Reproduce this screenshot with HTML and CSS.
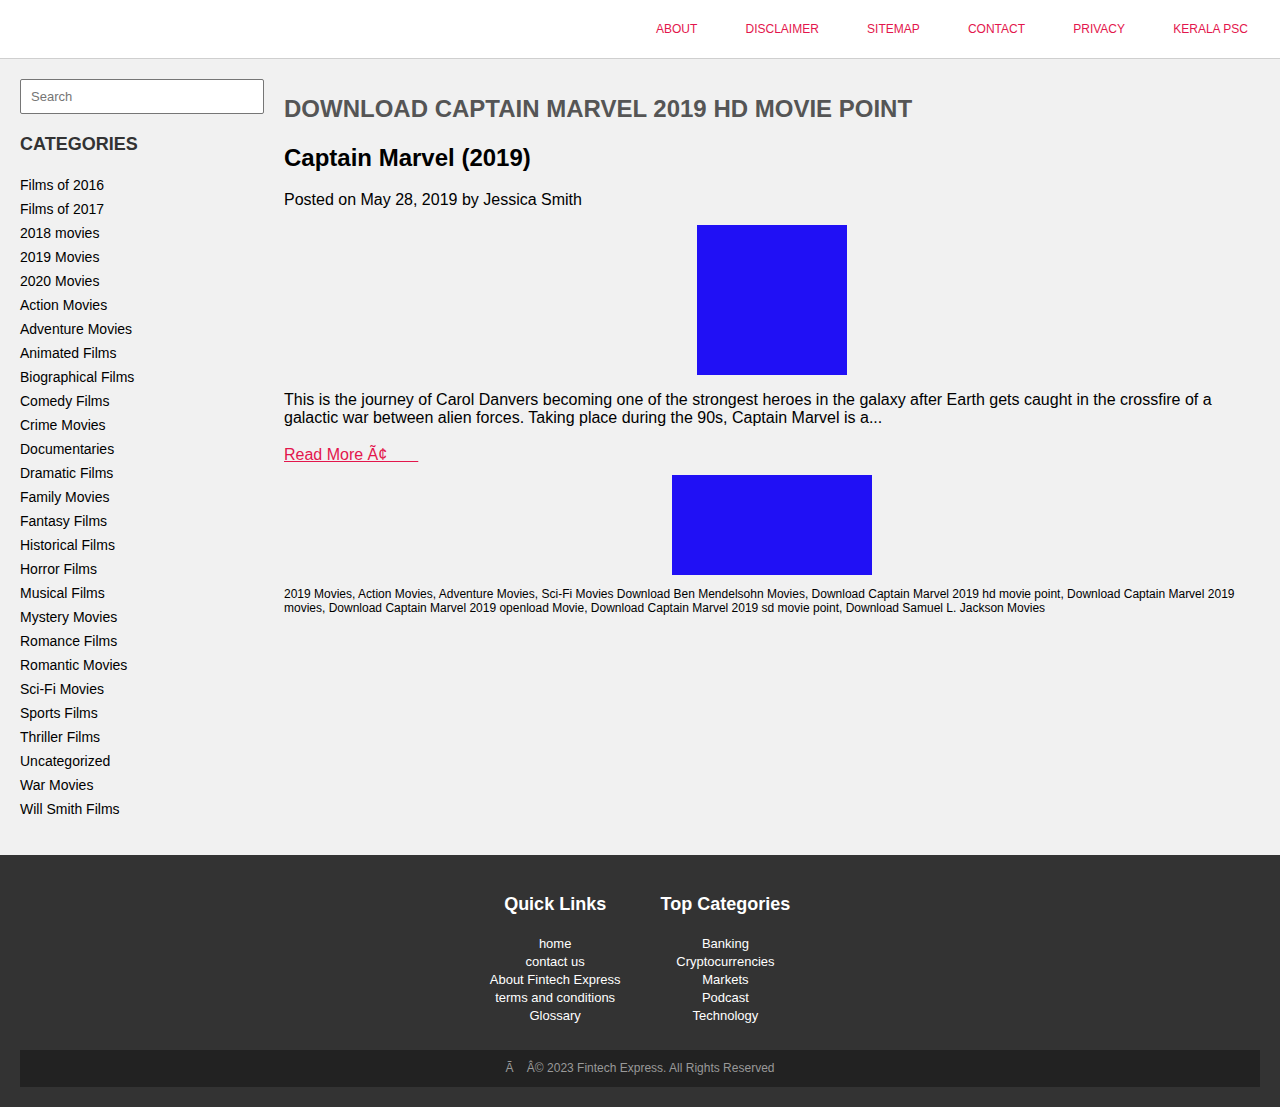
FILE: index.html
```html
<!doctype html>
<html lang="en">
<head>
	<meta charset="UTF-8">
	<title>Download Captain Marvel 2019 HD Movie Point</title>
	<link rel="stylesheet" href="styles.css">
</head>
<body>
	<header class="topbar">
		<nav class="topnav">
			<a href="#">About</a>
			<a href="#">Disclaimer</a>
			<a href="#">Sitemap</a>
			<a href="#">Contact</a>
			<a href="#">Privacy</a>
			<a href="#">Kerala PSC</a>
		</nav>
	</header>

	<div class="page">
		<aside class="sidebar">
			<input class="search" type="text" placeholder="Search">
			<h3 class="sideTitle">Categories</h3>
			<ul class="catList">
				<li><a href="#">Films of 2016</a></li>
				<li><a href="#">Films of 2017</a></li>
				<li><a href="#">2018 movies</a></li>
				<li><a href="#">2019 Movies</a></li>
				<li><a href="#">2020 Movies</a></li>
				<li><a href="#">Action Movies</a></li>
				<li><a href="#">Adventure Movies</a></li>
				<li><a href="#">Animated Films</a></li>
				<li><a href="#">Biographical Films</a></li>
				<li><a href="#">Comedy Films</a></li>
				<li><a href="#">Crime Movies</a></li>
				<li><a href="#">Documentaries</a></li>
				<li><a href="#">Dramatic Films</a></li>
				<li><a href="#">Family Movies</a></li>
				<li><a href="#">Fantasy Films</a></li>
				<li><a href="#">Historical Films</a></li>
				<li><a href="#">Horror Films</a></li>
				<li><a href="#">Musical Films</a></li>
				<li><a href="#">Mystery Movies</a></li>
				<li><a href="#">Romance Films</a></li>
				<li><a href="#">Romantic Movies</a></li>
				<li><a href="#">Sci-Fi Movies</a></li>
				<li><a href="#">Sports Films</a></li>
				<li><a href="#">Thriller Films</a></li>
				<li><a href="#">Uncategorized</a></li>
				<li><a href="#">War Movies</a></li>
				<li><a href="#">Will Smith Films</a></li>
			</ul>
		</aside>

		<main class="content">
			<h1 class="pageTitle">Download Captain Marvel 2019 HD Movie Point</h1>
			<h2 class="postTitle">Captain Marvel (2019)</h2>
			<p class="postMeta">Posted on May 28, 2019 by Jessica Smith</p>
			<div class="poster"></div>
			<p class="excerpt">This is the journey of Carol Danvers becoming one of the strongest heroes in the galaxy after Earth gets caught in the crossfire of a galactic war between alien forces. Taking place during the 90s, Captain Marvel is a...</p>
			<a class="readMore" href="#">Read More Ã¢&nbsp;&nbsp;&nbsp;&nbsp;&nbsp;&nbsp;&nbsp;</a>
			<div class="banner"></div>
			<p class="tags">2019 Movies, Action Movies, Adventure Movies, Sci-Fi Movies Download Ben Mendelsohn Movies, Download Captain Marvel 2019 hd movie point, Download Captain Marvel 2019 movies, Download Captain Marvel 2019 openload Movie, Download Captain Marvel 2019 sd movie point, Download Samuel L. Jackson Movies</p>
		</main>
	</div>

	<footer class="footer">
		<div class="footCols">
			<div class="footCol">
				<h3>Quick Links</h3>
				<a href="#">home</a>
				<a href="#">contact us</a>
				<a href="#">About Fintech Express</a>
				<a href="#">terms and conditions</a>
				<a href="#">Glossary</a>
			</div>
			<div class="footCol">
				<h3>Top Categories</h3>
				<a href="#">Banking</a>
				<a href="#">Cryptocurrencies</a>
				<a href="#">Markets</a>
				<a href="#">Podcast</a>
				<a href="#">Technology</a>
			</div>
		</div>
		<div class="copyright">Ã&nbsp;&nbsp;&nbsp;&nbsp;Â© 2023 Fintech Express. All Rights Reserved</div>
	</footer>
</body>
</html>
```

FILE: styles.css
```css
body {
	margin: 0;
	background: #f1f1f1;
	font-family: "Liberation Sans", Arial, sans-serif;
	color: #000;
}

a {
	text-decoration: none;
	color: inherit;
}

/* top bar with the menu on the right */
.topbar {
	height: 58px;
	background: #fff;
	border-bottom: 1px solid #cfcfcf;
	display: flex;
	justify-content: flex-end;
	align-items: center;
}
.topnav {
	display: flex;
	padding-right: 8px;
}
.topnav a {
	padding: 0 24.1px;
	font-size: 12px;
	text-transform: uppercase;
	color: #e3164c;
}

.page {
	display: flex;
	gap: 20px;
	padding: 20px 20px 34px;
}

/* sidebar */
.sidebar {
	width: 244px;
	flex: none;
}
.search {
	display: block;
	box-sizing: border-box;
	width: 244px;
	height: 35px;
	padding: 0 10px;
	border: 1px solid #767676;
	border-radius: 2px;
	background: #fff;
	font: 13px "Liberation Sans", Arial, sans-serif;
}
.search::placeholder {
	color: #757575;
}
.sideTitle {
	margin: 20px 0 18px;
	font-size: 18px;
	line-height: 21px;
	text-transform: uppercase;
	color: #333;
}
.catList {
	list-style: none;
	margin: 0;
	padding: 0;
}
.catList li {
	font-size: 14px;
	line-height: 24px;
}

/* main post */
.content {
	flex: 1;
	min-width: 0;
}
.pageTitle {
	margin: 17px 0 0;
	font-size: 24px;
	line-height: 26px;
	text-transform: uppercase;
	color: #555;
}
.postTitle {
	margin: 22px 0 0;
	font-size: 24px;
	line-height: 28px;
}
.postMeta {
	margin: 19px 0 0;
	font-size: 16px;
	line-height: 18px;
}
.poster {
	width: 150px;
	height: 150px;
	margin: 16px auto 0;
	background: #2010f5;
}
.excerpt {
	margin: 16px 0 0;
	font-size: 16px;
	line-height: 18px;
}
.readMore {
	display: inline-block;
	margin-top: 19px;
	font-size: 16px;
	line-height: 18px;
	color: #e3164c;
	text-decoration: underline;
}
.banner {
	width: 200px;
	height: 100px;
	margin: 11px auto 0;
	background: #2010f5;
}
.tags {
	margin: 12px 0 0;
	font-size: 12px;
	line-height: 14px;
}

/* footer */
.footer {
	background: #333;
	padding: 38px 20px 20px;
	color: #fff;
}
.footCols {
	display: flex;
	justify-content: center;
	gap: 40px;
}
.footCol {
	display: flex;
	flex-direction: column;
	align-items: center;
	font-size: 13px;
	line-height: 18px;
}
.footCol h3 {
	margin: 0 0 20px;
	font-size: 18px;
	line-height: 22px;
}
.copyright {
	margin-top: 25px;
	background: #222;
	color: #999;
	font-size: 12px;
	line-height: 37px;
	text-align: center;
}
```
